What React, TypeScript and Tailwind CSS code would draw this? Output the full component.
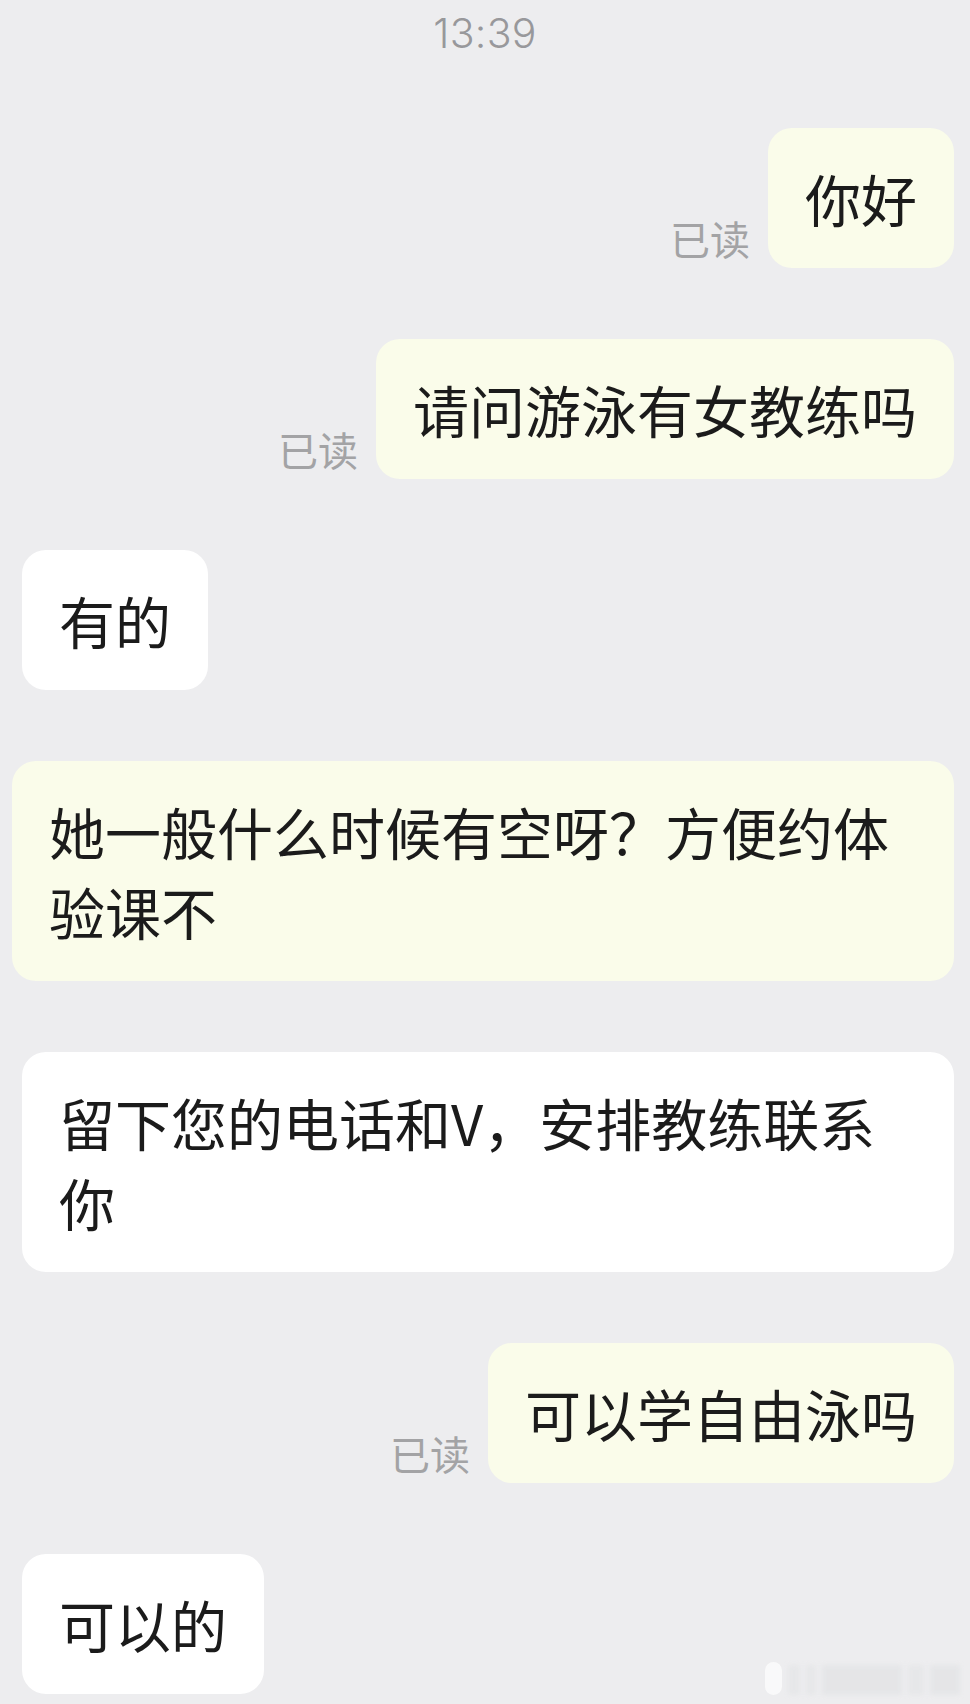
import React from 'react';

type Msg = {
  side: 'me' | 'them';
  lines: string[];
  width?: string;
};

const messages: Msg[] = [
  { side: 'me', lines: ['你好'] },
  { side: 'me', lines: ['请问游泳有女教练吗'] },
  { side: 'them', lines: ['有的'] },
  { side: 'me', lines: ['她一般什么时候有空呀？方便约体', '验课不'], width: 'w-[942px]' },
  { side: 'them', lines: ['留下您的电话和V，安排教练联系', '你'], width: 'w-[932px]' },
  { side: 'me', lines: ['可以学自由泳吗'] },
  { side: 'them', lines: ['可以的'] },
];

const cjk = { fontFamily: '"Noto Sans CJK SC", "Noto Sans", sans-serif' };

function Bubble({ msg }: { msg: Msg }) {
  const mine = msg.side === 'me';
  const showRead = mine && msg.lines.length === 1;
  return (
    <div className={`flex items-end ${mine ? 'justify-end pr-[16px]' : 'justify-start pl-[22px]'}`}>
      {showRead && (
        <span className="mr-[18px] mb-[4px] text-[40px] leading-[1.3] text-[#a3a3a5]" style={cjk}>
          已读
        </span>
      )}
      <div
        className={`rounded-[24px] px-[37px] py-[30px] text-[56px] leading-[80px] text-[#1b1b1b] ${
          mine ? 'bg-[#fafcea]' : 'bg-white'
        } ${msg.width ?? ''}`}
        style={cjk}
      >
        {msg.lines.map((l, i) => (
          <React.Fragment key={i}>
            {i > 0 && <br />}
            {l}
          </React.Fragment>
        ))}
      </div>
    </div>
  );
}

export default function App() {
  return (
    <div className="relative w-[970px] h-[1704px] overflow-hidden bg-[#ededef]">
      {/* 时间 */}
      <div className="flex h-[64px] items-center justify-center pt-[4px]">
        <span
          className="text-[41px] text-[#98989b] tracking-[0.3px]"
          style={{ fontFamily: 'Inter, "Liberation Sans", sans-serif', fontWeight: 300 }}
        >
          13:39
        </span>
      </div>

      <div className="mt-[64px] flex flex-col gap-[71px]">
        {messages.map((m, i) => (
          <Bubble key={i} msg={m} />
        ))}
      </div>

      {/* 水印 */}
      <div className="absolute bottom-[9px] right-[10px] flex items-end gap-[6px] opacity-70">
        <div className="h-[33px] w-[17px] rounded-full bg-white" />
        <div className="h-[30px] w-[12px] bg-[#e4e5e7] blur-[2px]" />
        <div className="h-[30px] w-[10px] bg-[#e4e5e7] blur-[2px]" />
        <div className="h-[30px] w-[80px] bg-[#e2e3e5] blur-[2px]" />
        <div className="h-[30px] w-[16px] bg-[#e4e5e7] blur-[2px]" />
        <div className="h-[30px] w-[30px] bg-[#e2e3e5] blur-[2px]" />
      </div>
    </div>
  );
}
